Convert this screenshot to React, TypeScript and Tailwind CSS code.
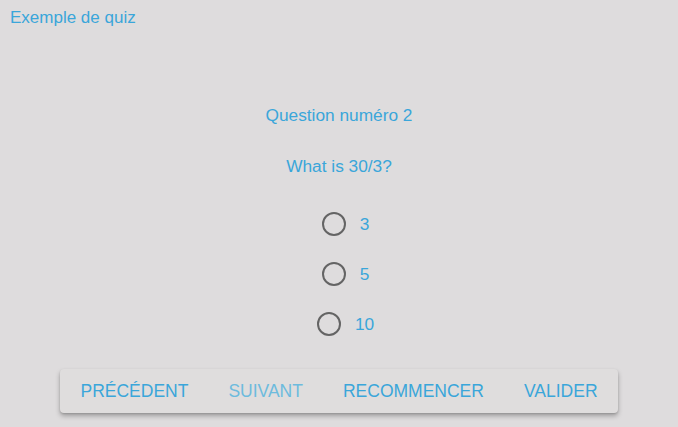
import React from "react";

const options = ["3", "5", "10"];
const actions = [
  { label: "PRÉCÉDENT", disabled: false },
  { label: "SUIVANT", disabled: true },
  { label: "RECOMMENCER", disabled: false },
  { label: "VALIDER", disabled: false },
];

export default function App() {
  return (
    <div
      className="min-h-[427px] w-full bg-[#dedcdd] text-[#3aa6da]"
      style={{ fontFamily: '"Liberation Sans", Arial, sans-serif' }}
    >
      <div className="px-[10px] pt-[8px] text-[17px] leading-[20px]">Exemple de quiz</div>

      <div className="flex flex-col items-center">
        <div className="mt-[77px] text-[17.3px] leading-[20px]">Question numéro 2</div>
        <div className="mt-[31px] text-[17.3px] leading-[20px]">What is 30/3?</div>

        <div className="mt-[36px] flex flex-col items-center gap-[26px]">
          {options.map((o) => (
            <label key={o} className="flex h-[24px] items-center gap-[14px] pl-[13px] cursor-pointer">
              <span className="block h-[24px] w-[24px] rounded-full border-2 border-[#646464]" />
              <span className="text-[17.3px] leading-[20px]">{o}</span>
            </label>
          ))}
        </div>

        <div className="mt-[33px] flex h-[44px] items-center rounded-[4px] bg-[#dfdddd] shadow-[0_3px_5px_rgba(0,0,0,0.28),0_1px_2px_rgba(0,0,0,0.12)]">
          {actions.map((a) => (
            <button
              key={a.label}
              type="button"
              disabled={a.disabled}
              className={`h-full px-[20px] text-[17.5px] leading-[20px] ${
                a.disabled ? "text-[#6dbbdd]" : "text-[#3aa6da]"
              }`}
            >
              {a.label}
            </button>
          ))}
        </div>
      </div>
    </div>
  );
}
